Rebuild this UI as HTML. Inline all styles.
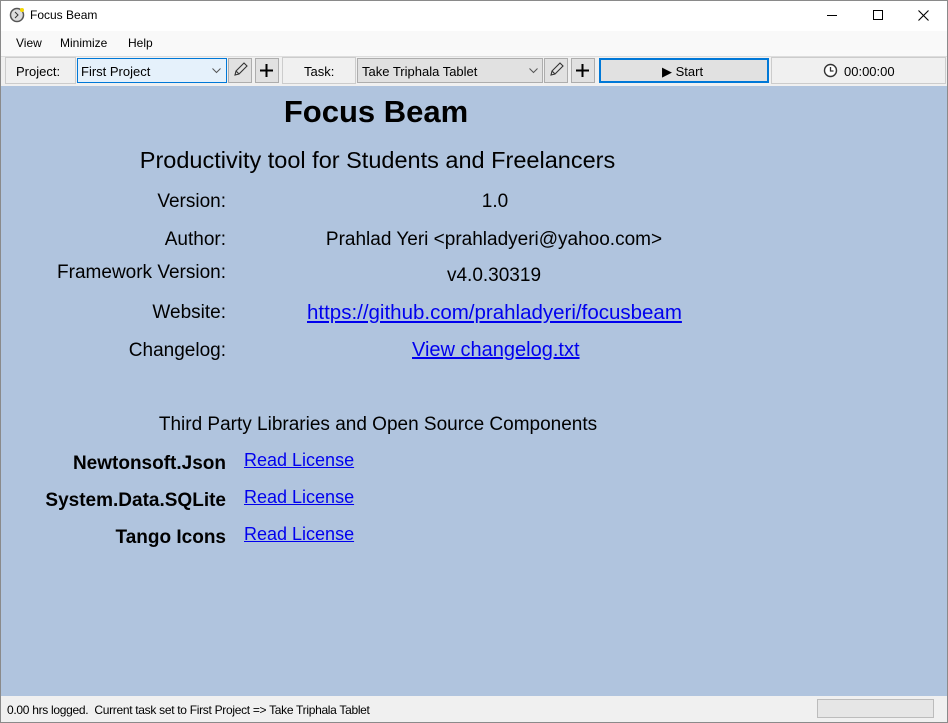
<!DOCTYPE html><html><head><style>
*{margin:0;padding:0;box-sizing:border-box}
body{width:948px;height:723px;overflow:hidden;font-family:"Liberation Sans",sans-serif;background:#fff;position:relative}
.a{position:absolute;white-space:nowrap}
.win{position:absolute;left:0;top:0;width:948px;height:723px;border:1px solid #8a8a8a}
.content{position:absolute;left:1px;top:86px;width:946px;height:610px;background:#b0c4de}
.t{font-size:19px;color:#000}
.r{text-align:right;width:226px;left:0}
a,.lk{color:#0000ee;text-decoration:underline}
.btn{position:absolute;background:#e1e1e1;border:1px solid #adadad}
</style></head><body>
<div class="win"></div>
<svg class="a" style="left:9px;top:7px" width="16" height="16"><circle cx="8" cy="8" r="6.5" fill="#ddd" stroke="#555" stroke-width="1.5"/><path d="M6 5l3 3-3 3" stroke="#333" fill="none"/><circle cx="13" cy="3" r="2" fill="#f5d800"/></svg>
<div class="a" style="left:30px;top:8px;font-size:12px">Focus Beam</div>
<div class="a" style="left:827px;top:15px;width:10px;height:1px;background:#000"></div>
<div class="a" style="left:873px;top:10px;width:10px;height:10px;border:1px solid #000"></div>
<svg class="a" style="left:918px;top:10px" width="11" height="11"><path d="M0.5 0.5l10 10M10.5 0.5l-10 10" stroke="#000" stroke-width="1.1"/></svg>
<div class="a" style="left:1px;top:31px;width:946px;height:25px;background:#f9f9f9"></div>
<div class="a" style="left:16px;top:36px;font-size:12px">View</div>
<div class="a" style="left:60px;top:36px;font-size:12px">Minimize</div>
<div class="a" style="left:128px;top:36px;font-size:12px">Help</div>
<div class="a" style="left:1px;top:56px;width:946px;height:30px;background:#f0f0f0;border-top:1px solid #ddd"></div>
<div class="a" style="left:5px;top:57px;width:71px;height:27px;border:1px solid #ccc"></div>
<div class="a" style="left:16px;top:64px;font-size:13px">Project:</div>
<div class="a" style="left:77px;top:58px;width:150px;height:25px;background:#e5f1fb;border:1px solid #0078d7"></div>
<div class="a" style="left:81px;top:64px;font-size:13px">First Project</div>
<svg class="a" style="left:212px;top:68px" width="9" height="6"><path d="M0.5 0.5l4 4 4-4" stroke="#555" fill="none"/></svg>
<div class="btn" style="left:228px;top:58px;width:24px;height:25px"></div>
<svg class="a" style="left:232px;top:62px" width="16" height="16"><path d="M3 13l1-4 8-8 3 3-8 8z M4 9l3 3" stroke="#333" fill="none" stroke-width="1.1"/></svg>
<div class="btn" style="left:255px;top:58px;width:24px;height:25px"></div>
<svg class="a" style="left:259px;top:63px" width="15" height="15"><path d="M7.5 1v13M1 7.5h13" stroke="#000" stroke-width="2"/></svg>
<div class="a" style="left:282px;top:57px;width:74px;height:27px;border:1px solid #ccc"></div>
<div class="a" style="left:304px;top:64px;font-size:13px">Task:</div>
<div class="btn" style="left:357px;top:58px;width:186px;height:25px"></div>
<div class="a" style="left:362px;top:64px;font-size:13px">Take Triphala Tablet</div>
<svg class="a" style="left:529px;top:68px" width="9" height="6"><path d="M0.5 0.5l4 4 4-4" stroke="#555" fill="none"/></svg>
<div class="btn" style="left:544px;top:58px;width:24px;height:25px"></div>
<svg class="a" style="left:548px;top:62px" width="16" height="16"><path d="M3 13l1-4 8-8 3 3-8 8z M4 9l3 3" stroke="#333" fill="none" stroke-width="1.1"/></svg>
<div class="btn" style="left:571px;top:58px;width:24px;height:25px"></div>
<svg class="a" style="left:575px;top:63px" width="15" height="15"><path d="M7.5 1v13M1 7.5h13" stroke="#000" stroke-width="2"/></svg>
<div class="a" style="left:599px;top:58px;width:170px;height:25px;background:#e1e1e1;border:2px solid #0078d7"></div>
<div class="a" style="left:662px;top:64px;font-size:13px">▶ Start</div>
<div class="a" style="left:771px;top:57px;width:175px;height:27px;border:1px solid #ccc"></div>
<svg class="a" style="left:823px;top:63px" width="15" height="15"><circle cx="7.5" cy="7.5" r="6" fill="#fff" stroke="#333" stroke-width="1.4"/><path d="M7.5 4v4h3" stroke="#333" fill="none" stroke-width="1.3"/></svg>
<div class="a" style="left:844px;top:64px;font-size:13px">00:00:00</div>
<div class="content"></div>
<div class="a" style="left:0;width:752px;top:94px;text-align:center;font-size:31px;font-weight:bold">Focus Beam</div>
<div class="a" style="left:0;width:755px;top:147px;text-align:center;font-size:23.5px">Productivity tool for Students and Freelancers</div>
<div class="a t r" style="top:191px">Version:</div>
<div class="a t" style="left:0;width:990px;top:191px;text-align:center">1.0</div>
<div class="a t r" style="top:229px">Author:</div>
<div class="a t" style="left:0;width:988px;top:229px;text-align:center">Prahlad Yeri &lt;prahladyeri@yahoo.com&gt;</div>
<div class="a t r" style="top:262px">Framework Version:</div>
<div class="a t" style="left:0;width:988px;top:265px;text-align:center">v4.0.30319</div>
<div class="a t r" style="top:302px">Website:</div>
<div class="a t lk" style="left:307px;top:301px;font-size:20.5px">https://github.com/prahladyeri/focusbeam</div>
<div class="a t r" style="top:340px">Changelog:</div>
<div class="a t lk" style="left:412px;top:339px;font-size:20px">View changelog.txt</div>
<div class="a t" style="left:0;width:756px;top:414px;text-align:center">Third Party Libraries and Open Source Components</div>
<div class="a t r" style="top:453px;font-weight:bold">Newtonsoft.Json</div>
<div class="a t lk" style="left:244px;top:450px;font-size:18px">Read License</div>
<div class="a t r" style="top:490px;font-weight:bold">System.Data.SQLite</div>
<div class="a t lk" style="left:244px;top:487px;font-size:18px">Read License</div>
<div class="a t r" style="top:527px;font-weight:bold">Tango Icons</div>
<div class="a t lk" style="left:244px;top:524px;font-size:18px">Read License</div>
<div class="a" style="left:1px;top:696px;width:946px;height:26px;background:#f0f0f0"></div>
<div class="a" style="left:7px;top:703px;font-size:12px;letter-spacing:-0.3px">0.00 hrs logged.&nbsp; Current task set to First Project =&gt; Take Triphala Tablet</div>
<div class="a" style="left:817px;top:699px;width:117px;height:19px;background:#e6e6e6;border:1px solid #bcbcbc"></div>
</body></html>
